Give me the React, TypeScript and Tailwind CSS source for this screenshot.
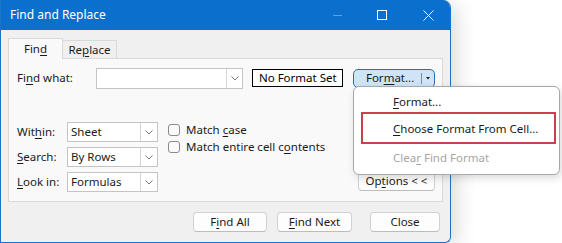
import React from 'react';

const font = "font-['Segoe_UI','Noto_Sans',sans-serif]";

const Chevron = () => (
  <svg width="8" height="5" viewBox="0 0 8 5" className="text-[#7a7a7a]">
    <polyline points="0.5,0.5 4,4 7.5,0.5" fill="none" stroke="currentColor" strokeWidth="1" />
  </svg>
);

const U = ({ children }: { children: React.ReactNode }) => <span className="underline underline-offset-2">{children}</span>;

const Select = ({ value }: { value: string }) => (
  <div className="flex h-[20px] w-[91px] items-stretch border border-[#c4c4c4] bg-white">
    <div className="flex flex-1 items-center pl-[3px] text-[11.5px] text-[#1a1a1a]">{value}</div>
    <div className="flex w-[17px] items-center justify-center border-l border-[#d6d6d6]">
      <Chevron />
    </div>
  </div>
);

const Check = ({ children }: { children: React.ReactNode }) => (
  <div className="flex h-[17px] items-center gap-[6px]">
    <div className="h-[12px] w-[12px] rounded-[3px] border border-[#8a8a8a] bg-[#fbfbfb]" />
    <span className="text-[11.5px] text-[#1a1a1a]">{children}</span>
  </div>
);

const Btn = ({ w, children, className = '' }: { w: string; children: React.ReactNode; className?: string }) => (
  <div className={`flex h-[20px] items-center justify-center rounded-[4px] border border-[#d1d1d1] border-b-[#bcbcbc] bg-[#fdfdfd] text-[11.5px] text-[#1a1a1a] ${w} ${className}`}>
    <span>{children}</span>
  </div>
);

export default function App() {
  return (
    <div className={`relative h-[243px] w-[562px] overflow-hidden bg-white ${font}`}>
      <div className="flex h-[243px] w-[451px] flex-col overflow-hidden rounded-tr-[8px] rounded-br-[6px] border-b border-l border-r border-[#1a73c8] bg-[#f0f0f0] shadow-[6px_4px_20px_rgba(0,0,0,0.14)]">
        {/* title bar */}
        <div className="flex h-[30px] shrink-0 items-center bg-[#0b6fcd] pl-[9px] text-white">
          <span className="text-[12px]">Find and Replace</span>
          <div className="ml-auto flex items-center">
            <div className="mr-[35px] h-px w-[9px] bg-[#5d9fe0]" />
            <div className="mr-[36px] h-[10px] w-[10px] border border-white" />
            <svg width="11" height="11" viewBox="0 0 11 11" className="mr-[16px]">
              <path d="M0.5 0.5 L10.5 10.5 M10.5 0.5 L0.5 10.5" stroke="white" strokeWidth="1" />
            </svg>
          </div>
        </div>

        {/* tabs */}
        <div className="mt-[8px] flex items-end pl-[7px]">
          <div className="relative z-10 -mb-px flex h-[21px] w-[55px] items-center justify-center border border-b-0 border-[#d9d9d9] bg-[#f9f9f9] text-[11.5px] text-[#1a1a1a]">
            <span>
              Fin<U>d</U>
            </span>
          </div>
          <div className="flex h-[18px] w-[54px] items-center justify-center border border-b-0 border-l-0 border-[#d9d9d9] bg-[#f0f0f0] text-[11.5px] text-[#1a1a1a]">
            <span>
              Re<U>p</U>lace
            </span>
          </div>
        </div>

        {/* panel */}
        <div className="ml-[7px] flex h-[144px] w-[435px] flex-col border border-[#d9d9d9] bg-[#f9f9f9] pl-[8px] pr-[7px] pt-[9px]">
          <div className="flex h-[20px] items-center">
            <span className="w-[79px] text-[11.5px] text-[#1a1a1a]">
              Fi<U>n</U>d what:
            </span>
            <div className="flex h-[21px] w-[148px] items-stretch border border-[#c4c4c4] bg-white">
              <div className="flex-1" />
              <div className="flex w-[16px] items-center justify-center border-l border-[#d6d6d6]">
                <Chevron />
              </div>
            </div>
            <div className="ml-[9px] flex h-[18px] w-[91px] items-center justify-center border border-black bg-white text-[11.5px] text-black">
              No Format Set
            </div>
            <div className="ml-[10px] flex h-[19px] w-[82px] items-center rounded-[5px] border border-[#2d6cb3] bg-[#cfe4f7] text-[11.5px] text-[#1a1a1a]">
              <span className="flex-1 pl-[5px] text-center">
                For<U>m</U>at...
              </span>
              <div className="h-[11px] w-px bg-[#8a8a8a]" />
              <svg width="10" height="6" viewBox="0 0 10 6" className="mx-[1px]">
                <polygon points="3,2 7,2 5,4.5" fill="#1a1a1a" />
              </svg>
            </div>
          </div>

          <div className="mt-[34px] flex">
            <div className="flex flex-col gap-[5px]">
              <div className="flex items-center">
                <span className="w-[50px] text-[11.5px] text-[#1a1a1a]">
                  Wit<U>h</U>in:
                </span>
                <Select value="Sheet" />
              </div>
              <div className="flex items-center">
                <span className="w-[50px] text-[11.5px] text-[#1a1a1a]">
                  <U>S</U>earch:
                </span>
                <Select value="By Rows" />
              </div>
              <div className="flex items-center">
                <span className="w-[50px] text-[11.5px] text-[#1a1a1a]">
                  <U>L</U>ook in:
                </span>
                <Select value="Formulas" />
              </div>
            </div>
            <div className="ml-[10px] mt-[-1px] flex flex-col">
              <Check>
                Match <U>c</U>ase
              </Check>
              <Check>
                Match entire cell c<U>o</U>ntents
              </Check>
            </div>
            <Btn w="w-[77px]" className="ml-auto mt-[49px] h-[19px]">
              Op<U>t</U>ions &lt; &lt;
            </Btn>
          </div>
        </div>

        {/* bottom buttons */}
        <div className="mt-[10px] flex pl-[192px]">
          <Btn w="w-[74px]">
            F<U>i</U>nd All
          </Btn>
          <Btn w="w-[75px]" className="ml-[10px]">
            <U>F</U>ind Next
          </Btn>
          <Btn w="w-[70px]" className="ml-[18px]">
            Close
          </Btn>
        </div>
      </div>

      {/* dropdown menu */}
      <div className="absolute left-[353px] top-[86px] flex h-[89px] w-[207px] flex-col rounded-[6px] border border-[#a8a8a8] bg-white text-[11.5px] shadow-[2px_3px_8px_rgba(0,0,0,0.15)]">
        <div className="mt-[5px] flex h-[20px] items-center pl-[39px] text-[#1a1a1a]">
          <span>
            <U>F</U>ormat...
          </span>
        </div>
        <div className="ml-[7px] flex h-[32px] w-[195px] items-center border-2 border-[#c7424f] pl-[30px] pt-[2px] text-[#1a1a1a]">
          <span>
            <U>C</U>hoose Format From Cell...
          </span>
        </div>
        <div className="mt-[4px] flex h-[20px] items-center pl-[39px] text-[#a6a6a6]">
          <span>
            Clea<U>r</U> Find Format
          </span>
        </div>
      </div>
    </div>
  );
}
